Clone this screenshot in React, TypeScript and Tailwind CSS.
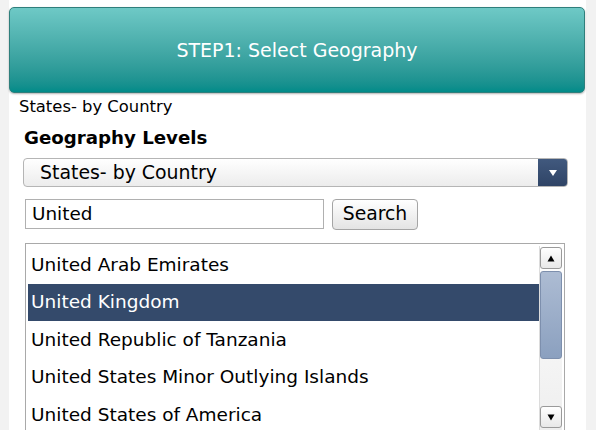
import React from "react";

const items = [
  "United Arab Emirates",
  "United Kingdom",
  "United Republic of Tanzania",
  "United States Minor Outlying Islands",
  "United States of America",
];

export default function App() {
  return (
    <div
      className="w-[596px] h-[430px] overflow-hidden bg-[#f2f2f2] flex"
      style={{ fontFamily: '"DejaVu Sans", Verdana, sans-serif' }}
    >
      <div className="ml-[9px] w-[577px] h-full bg-white flex flex-col pt-[7px]">
        <div className="h-[86px] w-[576px] shrink-0 rounded-[5px] border border-[#2f7f7c] bg-gradient-to-b from-[#6ec9c6] to-[#008b89] shadow-[0_1px_2px_rgba(0,0,0,0.3)] flex items-center justify-center">
          <span className="text-white text-[19px]">STEP1: Select Geography</span>
        </div>
        <div className="ml-[10px] mt-[4px] text-[16.4px] leading-[20px] text-black">States- by Country</div>
        <div className="ml-[15px] mt-[9px] text-[18.2px] leading-[24px] font-bold text-black">Geography Levels</div>
        <div className="ml-[14px] mt-[8px] w-[545px] h-[29px] shrink-0 flex rounded-[4px] border border-[#b5b5b5] bg-gradient-to-b from-white to-[#ececec] overflow-hidden">
          <div className="flex-1 flex items-center pl-[16px] text-[18.9px] text-black">States- by Country</div>
          <div className="w-[29px] h-full bg-gradient-to-b from-[#41597e] to-[#2f4466] flex items-center justify-center">
            <svg width="10" height="8" viewBox="0 0 10 8"><path d="M1 1 L9 1 L5 7 Z" fill="white" /></svg>
          </div>
        </div>
        <div className="ml-[16px] mt-[12px] flex items-start gap-[8px]">
          <div className="w-[299px] h-[30px] border border-[#b0b0b0] bg-white flex items-center pl-[6px] text-[18.4px] text-black">United</div>
          <div className="w-[86px] h-[31px] rounded-[4px] border border-[#a5a5a5] bg-gradient-to-b from-white to-[#e4e4e4] flex items-center justify-center text-[18.8px] text-black">Search</div>
        </div>
        <div className="ml-[16px] mt-[13px] w-[540px] h-[190px] shrink-0 border border-[#a9a9a9] bg-white flex p-[2px]">
          <div className="flex-1 flex flex-col">
            {items.map((t, i) => (
              <div
                key={t}
                className={
                  i === 1
                    ? "h-[37.5px] shrink-0 flex items-center pl-[3px] text-[18.5px] bg-[#344a6b] text-white"
                    : "h-[37.5px] shrink-0 flex items-center pl-[3px] text-[18.5px] text-black"
                }
              >
                {t}
              </div>
            ))}
          </div>
          <div className="w-[23px] flex flex-col pt-[1px] bg-gradient-to-b from-white to-[#eeeeee] border-l border-[#dcdcdc]">
            <div className="h-[22px] shrink-0 rounded-[3px] border border-[#9a9a9a] bg-gradient-to-b from-white to-[#e8e8e8] flex items-center justify-center">
              <svg width="8" height="7" viewBox="0 0 8 7"><path d="M4 0.5 L7.5 6.5 L0.5 6.5 Z" fill="black" /></svg>
            </div>
            <div className="mt-[2px] h-[88px] shrink-0 rounded-[3px] border border-[#7d8fad] bg-gradient-to-b from-[#adbcd3] to-[#8ba0bf]" />
            <div className="flex-1" />
            <div className="h-[22px] shrink-0 mb-[2px] rounded-[3px] border border-[#9a9a9a] bg-gradient-to-b from-white to-[#e8e8e8] flex items-center justify-center">
              <svg width="8" height="7" viewBox="0 0 8 7"><path d="M0.5 0.5 L7.5 0.5 L4 6.5 Z" fill="black" /></svg>
            </div>
          </div>
        </div>
      </div>
    </div>
  );
}
